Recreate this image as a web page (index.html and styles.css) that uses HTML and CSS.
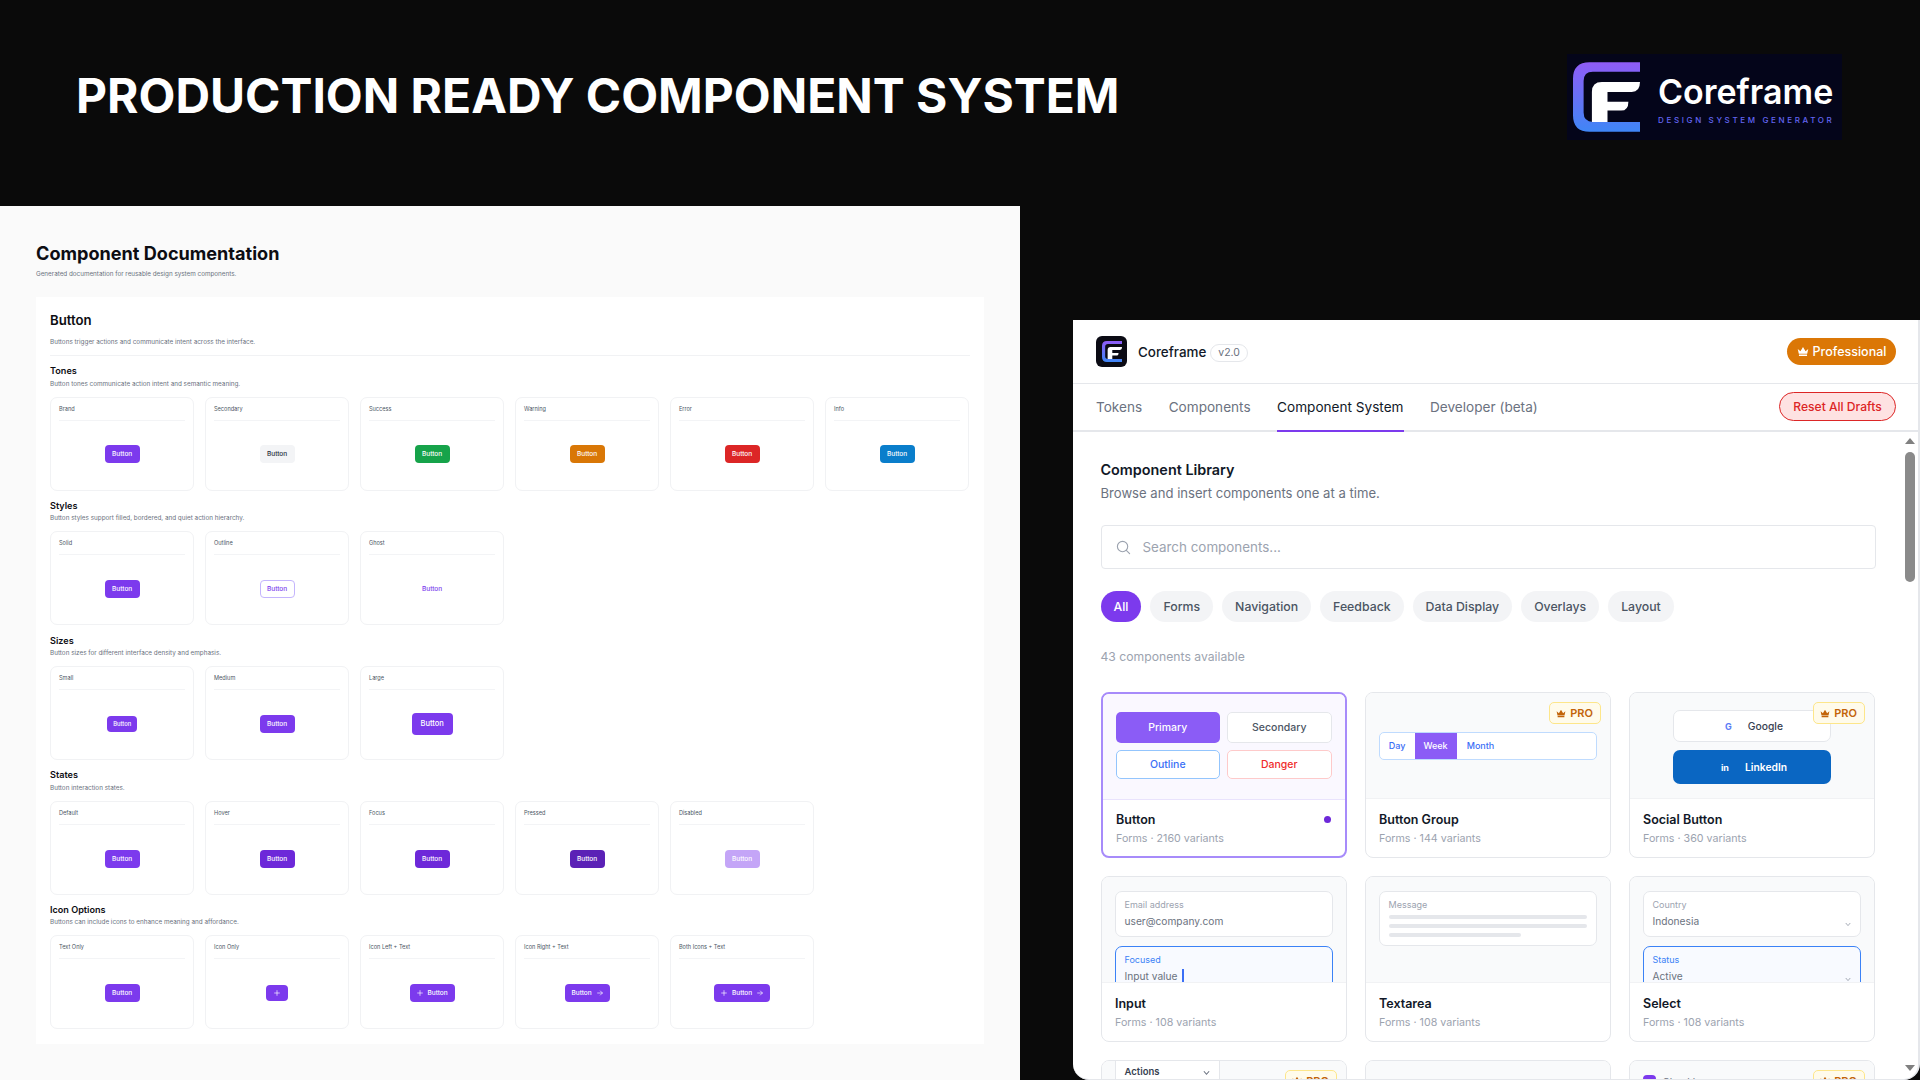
FILE: index.html
```html
<!DOCTYPE html>
<html lang="en">
<head>
<meta charset="utf-8">
<title>Production Ready Component System</title>
<link rel="stylesheet" href="styles.css">
</head>
<body>
<svg class="defs" width="0" height="0" aria-hidden="true">
  <defs>
    <linearGradient id="markGrad" x1="0" y1="0" x2="0" y2="1">
      <stop offset="0" stop-color="#8f5cf6"/>
      <stop offset="1" stop-color="#3f86f6"/>
    </linearGradient>
    <symbol id="mark" viewBox="158 96 202 210">
      <path fill="url(#markGrad)" d="M360 96H208Q158 96 158 146V256Q158 306 208 306H360V276H218Q190 276 190 248V153Q190 125 218 125H360Z"/>
      <path fill="#fff" d="M360 156H245Q215 156 215 186V276H262V242H303Q325 242 325 215H262V186H335Q360 186 360 156Z"/>
    </symbol>
    <symbol id="crown" viewBox="0 0 16 14">
      <path fill="currentColor" d="M1 3.500 4.600 6.600 8 1l3.400 5.600L15 3.500 13.600 10H2.400ZM2.600 11h10.800v2H2.600Z"/>
    </symbol>
    <symbol id="plus" viewBox="0 0 10 10">
      <path fill="none" stroke="currentColor" stroke-width="1.100" stroke-linecap="round" d="M5 1v8M1 5h8"/>
    </symbol>
    <symbol id="arrow" viewBox="0 0 10 10">
      <path fill="none" stroke="currentColor" stroke-width="1.100" stroke-linecap="round" stroke-linejoin="round" d="M1 5h8M5.600 1.600 9 5 5.600 8.400"/>
    </symbol>
    <symbol id="chev" viewBox="0 0 8 6">
      <path fill="none" stroke="currentColor" stroke-width="1.200" d="M1 1l3 3.500L7 1"/>
    </symbol>
  </defs>
</svg>

<header class="banner">
  <h1 class="banner-title">PRODUCTION READY COMPONENT SYSTEM</h1>
  <div class="brand">
    <svg class="brand-mark"><use href="#mark"/></svg>
    <div class="brand-text">
      <div class="brand-name">Coreframe</div>
      <div class="brand-tag">DESIGN SYSTEM GENERATOR</div>
    </div>
  </div>
</header>

<main class="stage">
  <section class="docs">
    <h2 class="docs-title">Component Documentation</h2>
    <p class="docs-sub">Generated documentation for reusable design system components.</p>
    <div class="sheet">
      <h3 class="sheet-title">Button</h3>
      <p class="sheet-sub">Buttons trigger actions and communicate intent across the interface.</p>
      <div class="sheet-rule"></div>

      <div class="group">
        <h4 class="group-title">Tones</h4>
        <p class="group-sub">Button tones communicate action intent and semantic meaning.</p>
        <div class="demo-grid">
          <div class="demo"><div class="demo-head">Brand</div><div class="demo-body"><span class="btn">Button</span></div></div>
          <div class="demo"><div class="demo-head">Secondary</div><div class="demo-body"><span class="btn btn-secondary">Button</span></div></div>
          <div class="demo"><div class="demo-head">Success</div><div class="demo-body"><span class="btn btn-success">Button</span></div></div>
          <div class="demo"><div class="demo-head">Warning</div><div class="demo-body"><span class="btn btn-warning">Button</span></div></div>
          <div class="demo"><div class="demo-head">Error</div><div class="demo-body"><span class="btn btn-error">Button</span></div></div>
          <div class="demo"><div class="demo-head">Info</div><div class="demo-body"><span class="btn btn-info">Button</span></div></div>
        </div>
      </div>

      <div class="group">
        <h4 class="group-title">Styles</h4>
        <p class="group-sub">Button styles support filled, bordered, and quiet action hierarchy.</p>
        <div class="demo-grid">
          <div class="demo"><div class="demo-head">Solid</div><div class="demo-body"><span class="btn">Button</span></div></div>
          <div class="demo"><div class="demo-head">Outline</div><div class="demo-body"><span class="btn btn-outline">Button</span></div></div>
          <div class="demo"><div class="demo-head">Ghost</div><div class="demo-body"><span class="btn btn-ghost">Button</span></div></div>
        </div>
      </div>

      <div class="group">
        <h4 class="group-title">Sizes</h4>
        <p class="group-sub">Button sizes for different interface density and emphasis.</p>
        <div class="demo-grid">
          <div class="demo"><div class="demo-head">Small</div><div class="demo-body"><span class="btn btn-sm">Button</span></div></div>
          <div class="demo"><div class="demo-head">Medium</div><div class="demo-body"><span class="btn">Button</span></div></div>
          <div class="demo"><div class="demo-head">Large</div><div class="demo-body"><span class="btn btn-lg">Button</span></div></div>
        </div>
      </div>

      <div class="group">
        <h4 class="group-title">States</h4>
        <p class="group-sub">Button interaction states.</p>
        <div class="demo-grid">
          <div class="demo"><div class="demo-head">Default</div><div class="demo-body"><span class="btn">Button</span></div></div>
          <div class="demo"><div class="demo-head">Hover</div><div class="demo-body"><span class="btn btn-hover">Button</span></div></div>
          <div class="demo"><div class="demo-head">Focus</div><div class="demo-body"><span class="btn btn-hover">Button</span></div></div>
          <div class="demo"><div class="demo-head">Pressed</div><div class="demo-body"><span class="btn btn-pressed">Button</span></div></div>
          <div class="demo"><div class="demo-head">Disabled</div><div class="demo-body"><span class="btn btn-disabled">Button</span></div></div>
        </div>
      </div>

      <div class="group">
        <h4 class="group-title">Icon Options</h4>
        <p class="group-sub">Buttons can include icons to enhance meaning and affordance.</p>
        <div class="demo-grid">
          <div class="demo"><div class="demo-head">Text Only</div><div class="demo-body"><span class="btn">Button</span></div></div>
          <div class="demo"><div class="demo-head">Icon Only</div><div class="demo-body"><span class="btn btn-icon"><svg class="btn-glyph"><use href="#plus"/></svg></span></div></div>
          <div class="demo"><div class="demo-head">Icon Left + Text</div><div class="demo-body"><span class="btn btn-with"><svg class="btn-glyph"><use href="#plus"/></svg>Button</span></div></div>
          <div class="demo"><div class="demo-head">Icon Right + Text</div><div class="demo-body"><span class="btn btn-with">Button<svg class="btn-glyph"><use href="#arrow"/></svg></span></div></div>
          <div class="demo"><div class="demo-head">Both Icons + Text</div><div class="demo-body"><span class="btn btn-with"><svg class="btn-glyph"><use href="#plus"/></svg>Button<svg class="btn-glyph"><use href="#arrow"/></svg></span></div></div>
        </div>
      </div>
    </div>
  </section>

  <section class="app">
    <div class="app-top">
      <div class="app-logo"><svg class="app-logo-mark"><use href="#mark"/></svg></div>
      <span class="app-name">Coreframe</span>
      <span class="app-version">v2.0</span>
      <span class="plan"><svg class="plan-crown"><use href="#crown"/></svg>Professional</span>
    </div>
    <nav class="tabs">
      <span class="tab">Tokens</span>
      <span class="tab">Components</span>
      <span class="tab tab-active">Component System</span>
      <span class="tab">Developer (beta)</span>
      <span class="reset">Reset All Drafts</span>
    </nav>
    <div class="library">
      <h2 class="lib-title">Component Library</h2>
      <p class="lib-sub">Browse and insert components one at a time.</p>
      <div class="search">
        <svg class="search-icon" viewBox="0 0 16 16"><circle cx="7" cy="7" r="5.500" fill="none" stroke="currentColor" stroke-width="1.200"/><path d="M11 11l3.500 3.500" fill="none" stroke="currentColor" stroke-width="1.200" stroke-linecap="round"/></svg>
        <span>Search components...</span>
      </div>
      <div class="chips">
        <span class="chip chip-on">All</span>
        <span class="chip">Forms</span>
        <span class="chip">Navigation</span>
        <span class="chip">Feedback</span>
        <span class="chip">Data Display</span>
        <span class="chip">Overlays</span>
        <span class="chip">Layout</span>
      </div>
      <p class="count">43 components available</p>
      <div class="cards">
        <article class="card card-on">
          <div class="preview preview-on">
            <div class="pair-grid">
              <span class="pv pv-primary">Primary</span>
              <span class="pv pv-secondary">Secondary</span>
              <span class="pv pv-outline">Outline</span>
              <span class="pv pv-danger">Danger</span>
            </div>
          </div>
          <div class="foot">
            <div><div class="foot-name">Button</div><div class="foot-meta">Forms · 2160 variants</div></div>
            <span class="dot"></span>
          </div>
        </article>

        <article class="card">
          <span class="pro"><svg class="pro-crown"><use href="#crown"/></svg>PRO</span>
          <div class="preview preview-mid">
            <div class="seg">
              <span class="seg-item seg-day">Day</span>
              <span class="seg-item seg-on">Week</span>
              <span class="seg-item seg-month">Month</span>
            </div>
          </div>
          <div class="foot">
            <div><div class="foot-name">Button Group</div><div class="foot-meta">Forms · 144 variants</div></div>
          </div>
        </article>

        <article class="card">
          <span class="pro"><svg class="pro-crown"><use href="#crown"/></svg>PRO</span>
          <div class="preview preview-social">
            <span class="social social-google"><span class="social-ic social-g">G</span>Google</span>
            <span class="social social-linkedin"><span class="social-ic">in</span>LinkedIn</span>
          </div>
          <div class="foot">
            <div><div class="foot-name">Social Button</div><div class="foot-meta">Forms · 360 variants</div></div>
          </div>
        </article>

        <article class="card">
          <div class="preview preview-stack">
            <div class="field"><span class="field-label">Email address</span><span class="field-value">user@company.com</span></div>
            <div class="field field-focus"><span class="field-label">Focused</span><span class="field-value">Input value<i class="caret"></i></span></div>
          </div>
          <div class="foot">
            <div><div class="foot-name">Input</div><div class="foot-meta">Forms · 108 variants</div></div>
          </div>
        </article>

        <article class="card">
          <div class="preview preview-stack">
            <div class="field field-area">
              <span class="field-label">Message</span>
              <span class="line"></span><span class="line"></span><span class="line line-short"></span>
            </div>
          </div>
          <div class="foot">
            <div><div class="foot-name">Textarea</div><div class="foot-meta">Forms · 108 variants</div></div>
          </div>
        </article>

        <article class="card">
          <div class="preview preview-stack">
            <div class="field"><span class="field-label">Country</span><span class="field-value">Indonesia</span><svg class="field-chev"><use href="#chev"/></svg></div>
            <div class="field field-focus"><span class="field-label">Status</span><span class="field-value">Active</span><svg class="field-chev"><use href="#chev"/></svg></div>
          </div>
          <div class="foot">
            <div><div class="foot-name">Select</div><div class="foot-meta">Forms · 108 variants</div></div>
          </div>
        </article>

        <article class="card">
          <span class="pro pro-low"><svg class="pro-crown"><use href="#crown"/></svg>PRO</span>
          <div class="preview preview-stack">
            <div class="menu"><span>Actions</span><svg class="menu-chev"><use href="#chev"/></svg></div>
          </div>
        </article>

        <article class="card">
          <div class="preview preview-stack"></div>
        </article>

        <article class="card">
          <span class="pro pro-low"><svg class="pro-crown"><use href="#crown"/></svg>PRO</span>
          <div class="preview preview-stack">
            <div class="check"><span class="check-box"></span><span>Checkbox</span></div>
          </div>
        </article>
      </div>
    </div>
    <div class="scroll-rail">
      <span class="scroll-up"></span>
      <span class="scroll-thumb"></span>
      <span class="scroll-down"></span>
    </div>
  </section>
</main>
</body>
</html>
```
FILE: styles.css
```css
* { box-sizing: border-box; margin: 0; padding: 0; }

html, body { height: 100%; }

body {
  width: 1920px;
  height: 1080px;
  overflow: hidden;
  background: #0a0a0a;
  font-family: "Inter", "Liberation Sans", sans-serif;
  color: #111827;
  display: flex;
  flex-direction: column;
}

.defs { position: absolute; }

/* Banner */
.banner {
  height: 206px;
  flex: none;
  display: flex;
  align-items: flex-start;
  justify-content: space-between;
  padding: 54px 78px 0 76px;
}

.banner-title {
  font-size: 47.900px;
  line-height: 84px;
  font-weight: 700;
  color: #fff;
}

.brand {
  width: 275px;
  height: 86px;
  background: #04051a;
  display: flex;
  align-items: center;
  padding-left: 6px;
  gap: 18px;
}

.brand-mark { width: 67px; height: 70px; flex: none; }

.brand-text { display: flex; flex-direction: column; }

.brand-name {
  font-size: 34px;
  line-height: 38px;
  font-weight: 600;
  color: #fff;
  margin-top: 4px;
}

.brand-tag {
  font-size: 8px;
  line-height: 12px;
  font-weight: 500;
  letter-spacing: 2.640px;
  color: #6366f1;
  white-space: nowrap;
  margin-top: 3px;
}

.stage { flex: 1; display: flex; min-height: 0; }

/* Docs panel */
.docs {
  width: 1020px;
  flex: none;
  background: #fafafa;
  padding: 35px 36px 0;
}

.docs-title {
  font-size: 18.100px;
  line-height: 24px;
  font-weight: 700;
  color: #0d0d12;
}

.docs-sub {
  font-size: 6.300px;
  line-height: 10px;
  color: #6b7280;
  margin-top: 4px;
  margin-bottom: 18px;
}

.sheet {
  background: #fff;
  padding: 14.500px 14px 14.500px;
}

.sheet-title {
  font-size: 13.200px;
  line-height: 16px;
  font-weight: 600;
  color: #0d0d12;
}

.sheet-sub {
  font-size: 6.350px;
  line-height: 10px;
  color: #6b7280;
  margin-top: 9px;
}

.sheet-rule {
  height: 1px;
  background: #f1f2f4;
  margin-top: 8.500px;
  margin-bottom: 9.200px;
}

.group + .group { margin-top: 9.200px; }

.group-title {
  font-size: 9.100px;
  line-height: 12px;
  font-weight: 600;
  color: #0d0d12;
}

.group-sub {
  font-size: 6.350px;
  line-height: 9px;
  color: #6b7280;
  margin-top: 2.500px;
  margin-bottom: 8px;
}

.demo-grid {
  display: grid;
  grid-template-columns: repeat(6, 144.300px);
  column-gap: 10.700px;
}

.demo {
  height: 94px;
  background: #fff;
  border: 1px solid #f1f2f4;
  border-radius: 7px;
  padding: 0 8px;
  display: flex;
  flex-direction: column;
}

.demo-head {
  height: 23px;
  flex: none;
  border-bottom: 1px solid #f3f4f6;
  font-size: 5.600px;
  line-height: 23px;
  color: #4b5563;
}

.demo-body {
  flex: 1;
  display: flex;
  align-items: center;
  justify-content: center;
  padding-bottom: 1.500px;
}

.btn {
  width: 35px;
  height: 18px;
  border-radius: 4px;
  background: #7c3aed;
  color: #fff;
  font-size: 6.500px;
  font-weight: 500;
  display: flex;
  align-items: center;
  justify-content: center;
}

.btn-secondary { background: #f3f4f6; color: #1f2937; }
.btn-success { background: #16a34a; }
.btn-warning { background: #d97706; }
.btn-error { background: #dc2626; }
.btn-info { background: #0a7ecb; }
.btn-outline { background: #fff; border: 1px solid #c4b5fd; color: #7c3aed; }
.btn-ghost { background: transparent; color: #7c3aed; }
.btn-sm { width: 30px; height: 15.500px; font-size: 5.800px; }
.btn-lg { width: 41px; height: 21.500px; font-size: 7.500px; }
.btn-hover { background: #6d28d9; }
.btn-pressed { background: #5b21b6; }
.btn-disabled { background: #c4a5f7; }
.btn-icon { width: 21.500px; height: 16px; }
.btn-with { width: auto; padding: 0 7px; gap: 5px; }
.btn-glyph { width: 6px; height: 6px; flex: none; }

/* App window */
.app {
  position: relative;
  width: 847px;
  height: 760px;
  margin-left: 53px;
  margin-top: 114px;
  background: #fff;
  border-right: 2px solid #e5e7eb;
  border-bottom: 1px solid #e5e7eb;
  border-radius: 0 0 16px 16px;
  overflow: hidden;
  flex: none;
}

.app-top {
  height: 64px;
  border-bottom: 1px solid #e5e7eb;
  padding: 0 22px 1px 23px;
  display: flex;
  align-items: center;
}

.app-logo {
  width: 31px;
  height: 31px;
  border-radius: 6px;
  background: #0b0b14;
  display: flex;
  align-items: center;
  justify-content: center;
}

.app-logo-mark { width: 20px; height: 21px; }

.app-name {
  font-size: 13.400px;
  font-weight: 500;
  color: #111827;
  margin-left: 11px;
  margin-top: 2px;
}

.app-version {
  height: 18px;
  padding: 0 7px;
  border: 1px solid #e5e7eb;
  border-radius: 9px;
  font-size: 10.500px;
  line-height: 16px;
  color: #6b7280;
  margin-left: 4px;
  margin-top: 4px;
}

.plan {
  margin-left: auto;
  width: 109px;
  height: 27px;
  border-radius: 14px;
  background: #db7706;
  color: #fff;
  font-size: 12.500px;
  font-weight: 500;
  display: flex;
  align-items: center;
  justify-content: center;
  gap: 4px;
}

.plan-crown { width: 12px; height: 11px; }

.tabs {
  height: 48px;
  border-bottom: 2px solid #e5e7eb;
  padding: 0 22px 0 23px;
  display: flex;
  align-items: center;
  gap: 26.500px;
}

.tab {
  position: relative;
  height: 46px;
  font-size: 13.600px;
  line-height: 46px;
  color: #6b7280;
}

.tab-active { color: #111827; }

.tab-active::after {
  content: "";
  position: absolute;
  left: 0;
  right: 0;
  bottom: -2px;
  height: 2px;
  background: #7c3aed;
}

.reset {
  margin-left: auto;
  width: 117px;
  height: 29px;
  border: 1px solid #dc2626;
  border-radius: 15px;
  background: #fee2e2;
  color: #dc2626;
  font-size: 12.100px;
  font-weight: 500;
  display: flex;
  align-items: center;
  justify-content: center;
  margin-bottom: 2px;
}

.library { padding: 28px 0 0 27.500px; width: 802px; }

.lib-title {
  font-size: 14.400px;
  line-height: 20px;
  font-weight: 600;
  color: #111827;
}

.lib-sub {
  font-size: 13.100px;
  line-height: 18px;
  color: #6b7280;
  margin-top: 3.500px;
}

.search {
  height: 44px;
  width: 775px;
  margin-top: 23.500px;
  border: 1px solid #e5e7eb;
  border-radius: 4px;
  padding-left: 14px;
  display: flex;
  align-items: center;
  gap: 12px;
  font-size: 13.400px;
  color: #9ca3af;
}

.search-icon { width: 15px; height: 15px; color: #9ca3af; flex: none; }

.chips { display: flex; gap: 9px; margin-top: 22px; }

.chip {
  height: 31px;
  padding: 0 13px;
  border-radius: 16px;
  background: #f3f4f6;
  color: #4b5563;
  font-size: 12.300px;
  font-weight: 500;
  display: flex;
  align-items: center;
}

.chip-on { background: #7c3aed; color: #fff; }

.count {
  font-size: 12.200px;
  line-height: 16px;
  color: #9ca3af;
  margin-top: 27px;
}

.cards {
  display: grid;
  grid-template-columns: repeat(3, 246px);
  grid-auto-rows: 166px;
  gap: 18px;
  margin-top: 27px;
}

.card {
  position: relative;
  border: 1.500px solid #e5e7eb;
  border-radius: 8px;
  overflow: hidden;
  background: #fff;
  display: flex;
  flex-direction: column;
}

.card-on { border: 2px solid #a78bfa; }

.preview {
  height: 106px;
  flex: none;
  background: #f9fafb;
  border-bottom: 1px solid #f1f2f4;
}

.preview-on { background: #faf8ff; border-bottom-color: #e9e3fd; padding: 18px 13px 0; }

.pair-grid {
  display: grid;
  grid-template-columns: 1fr 1fr;
  grid-template-rows: 30.500px 29.500px;
  gap: 7px;
}

.pv {
  border-radius: 5px;
  font-size: 10.500px;
  font-weight: 500;
  display: flex;
  align-items: center;
  justify-content: center;
}

.pv-primary { background: #8b5cf6; color: #fff; }
.pv-secondary { background: #fff; border: 1px solid #e5e7eb; color: #4b5563; }
.pv-outline { background: #fff; border: 1px solid #93c5fd; color: #3b6ff6; }
.pv-danger { background: #fff; border: 1px solid #fecaca; color: #ef2b2b; }

.foot {
  flex: 1;
  padding: 1px 13.500px 0;
  display: flex;
  align-items: center;
  justify-content: space-between;
}

.foot-name {
  font-size: 12.500px;
  line-height: 18px;
  font-weight: 600;
  color: #111827;
}

.foot-meta {
  font-size: 10.700px;
  line-height: 16px;
  color: #9ca3af;
  margin-top: 2px;
}

.dot { width: 7px; height: 7px; border-radius: 50%; background: #6d28d9; margin-top: -18px; }

.pro {
  position: absolute;
  top: 9px;
  right: 9px;
  width: 52px;
  height: 22px;
  border: 1px solid #fde68a;
  border-radius: 5px;
  background: #fffbeb;
  color: #c2640a;
  font-size: 11px;
  font-weight: 600;
  display: flex;
  align-items: center;
  justify-content: center;
  gap: 4px;
  z-index: 1;
}

.pro-low { top: 8.500px; }

.pro-crown { width: 10px; height: 9px; }

.preview-mid { padding: 38.500px 13px 0; }

.seg {
  height: 28.500px;
  border: 1px solid #bfdbfe;
  border-radius: 5px;
  background: #fff;
  display: flex;
  overflow: hidden;
  font-size: 9px;
  font-weight: 500;
  color: #3b6ff6;
}

.seg-item { display: flex; align-items: center; justify-content: center; }
.seg-day { width: 35px; }
.seg-on { width: 42px; background: #8b5cf6; color: #fff; }
.seg-month { width: 48px; }

.preview-social {
  display: flex;
  flex-direction: column;
  align-items: center;
  gap: 8px;
  padding-top: 17px;
}

.social {
  width: 158px;
  height: 32px;
  border-radius: 7px;
  font-size: 10.300px;
  font-weight: 500;
  display: flex;
  align-items: center;
  justify-content: center;
  gap: 16px;
  padding-left: 5px;
}

.social-google { background: #fff; border: 1px solid #e5e7eb; color: #374151; }
.social-linkedin { background: #0a66c2; color: #fff; font-weight: 600; height: 34px; }
.social-ic { font-size: 9px; font-weight: 700; }
.social-g { color: #5b7cf6; }

.preview-stack { padding: 14px 13px 0; overflow: hidden; }

.field {
  position: relative;
  height: 45.500px;
  border: 1px solid #e5e7eb;
  border-radius: 7px;
  background: #fff;
  padding: 6px 9px 0;
  display: flex;
  flex-direction: column;
}

.field-label { font-size: 9px; line-height: 13px; color: #9ca3af; }
.field-value { font-size: 10.200px; line-height: 16px; color: #6b7280; margin-top: 2px; display: flex; align-items: center; }

.field-focus {
  height: 60px;
  margin-top: 9px;
  border: 1.500px solid #3b82f6;
  background: #f8faff;
}

.field-focus .field-label { color: #3b82f6; }

.caret { width: 2px; height: 13px; background: #3b6ff6; margin-left: 4px; display: block; }

.field-chev {
  position: absolute;
  right: 9px;
  top: 30px;
  width: 6px;
  height: 5px;
  color: #9ca3af;
}

.field-area { height: 54.500px; }

.line { height: 4px; border-radius: 2px; background: #e5e7eb; margin-top: 5px; flex: none; }
.field-label + .line { margin-top: 4px; }
.line-short { width: 67%; }

.menu {
  height: 40px;
  width: 105px;
  margin-top: -25px;
  border: 1px solid #e5e7eb;
  border-top: 0;
  background: #fff;
  display: flex;
  align-items: flex-end;
  justify-content: space-between;
  padding: 0 9px 12px;
  font-size: 9.500px;
  font-weight: 600;
  color: #374151;
}

.menu-chev { width: 7px; height: 6px; color: #6b7280; margin-bottom: 1px; }

.check { display: flex; align-items: center; gap: 7px; font-size: 10px; color: #6b7280; }
.check-box { width: 13px; height: 13px; border-radius: 4px; background: #7c3aed; }

/* Native scrollbar look */
.scroll-rail {
  position: absolute;
  top: 112px;
  right: 1.500px;
  bottom: 0;
  width: 13px;
  display: flex;
  flex-direction: column;
  align-items: center;
}

.scroll-up {
  width: 0;
  height: 0;
  margin-top: 6px;
  border-left: 5px solid transparent;
  border-right: 5px solid transparent;
  border-bottom: 6px solid #808080;
}

.scroll-thumb {
  width: 10px;
  height: 130px;
  border-radius: 5px;
  background: #8a8a8a;
  margin-top: 8px;
}

.scroll-down {
  width: 0;
  height: 0;
  margin-top: auto;
  margin-bottom: 8px;
  border-left: 5px solid transparent;
  border-right: 5px solid transparent;
  border-top: 6px solid #808080;
}
```
